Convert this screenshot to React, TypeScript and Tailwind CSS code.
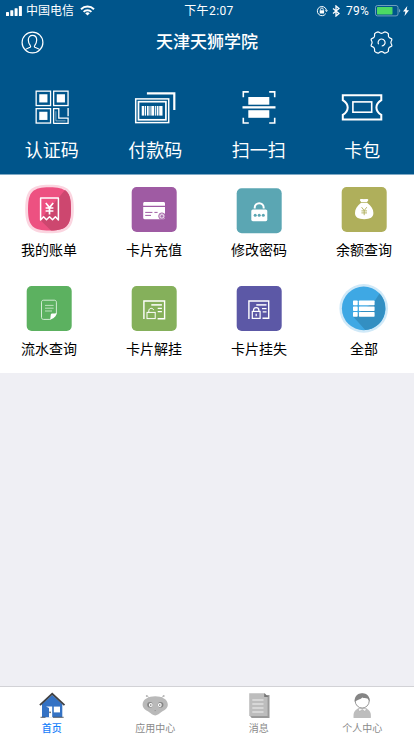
import { type ReactNode } from 'react';
import clsx from 'clsx';

interface Item {
  label: string;
  icon: ReactNode;
}

const quickActions: Item[] = [
  { label: '认证码', icon: <QrIcon /> },
  { label: '付款码', icon: <BarcodeIcon /> },
  { label: '扫一扫', icon: <ScanIcon /> },
  { label: '卡包', icon: <TicketIcon /> },
];

const services: Item[] = [
  { label: '我的账单', icon: <BillIcon /> },
  { label: '卡片充值', icon: <RechargeIcon /> },
  { label: '修改密码', icon: <PasswordIcon /> },
  { label: '余额查询', icon: <BalanceIcon /> },
  { label: '流水查询', icon: <HistoryIcon /> },
  { label: '卡片解挂', icon: <CardUnlockIcon /> },
  { label: '卡片挂失', icon: <CardLockIcon /> },
  { label: '全部', icon: <AllIcon /> },
];

const tabs: Item[] = [
  { label: '首页', icon: <HomeIcon /> },
  { label: '应用中心', icon: <RobotIcon /> },
  { label: '消息', icon: <MessageIcon /> },
  { label: '个人中心', icon: <PersonIcon /> },
];

export default function App() {
  return (
    <div className="flex h-screen w-full flex-col overflow-hidden bg-[#efeff4] font-['Roboto','Noto_Sans_CJK_SC',sans-serif]">
      <header className="h-[174px] shrink-0 bg-[#00558b] text-white">
        <StatusBar />
        <div className="flex h-11 items-center justify-between px-[21px]">
          <UserIcon />
          <h1 className="text-[17px] leading-6 font-medium">天津天狮学院</h1>
          <GearIcon />
        </div>
        <nav className="grid grid-cols-4 pt-[25px]">
          {quickActions.map((item) => (
            <button key={item.label} type="button" className="flex flex-col items-center">
              {item.icon}
              <span className="mt-3.5 text-[18px] leading-6">{item.label}</span>
            </button>
          ))}
        </nav>
      </header>

      <section className="h-[199px] shrink-0 border-t border-[#7fa9c5] bg-white pt-[9px]">
        <div className="-mr-[2.5px] -ml-[3.5px] grid grid-cols-4">
          {services.map((item) => (
            <button key={item.label} type="button" className="flex h-[99px] flex-col items-center">
              {item.icon}
              <span className="mt-1.5 text-[14px] leading-5 text-black">{item.label}</span>
            </button>
          ))}
        </div>
      </section>

      <footer className="mt-auto grid h-[50px] shrink-0 grid-cols-4 border-t border-[#d2d2d6] bg-white">
        {tabs.map((tab, i) => (
          <button key={tab.label} type="button" className="flex flex-col items-center pt-[5px]">
            {tab.icon}
            <span
              className={clsx(
                'mt-[3px] text-[10px] leading-3',
                i === 0 ? 'font-medium text-[#1680fa]' : 'text-[#8a8a8a]',
              )}
            >
              {tab.label}
            </span>
          </button>
        ))}
      </footer>
    </div>
  );
}

function StatusBar() {
  return (
    <div className="grid h-5 grid-cols-[1fr_auto_1fr] items-center pt-px text-[12px] leading-4">
      <div className="flex items-center pl-[6px]">
        <svg width="17" height="10" viewBox="0 0 17 10" fill="#fff">
          <rect x="0" y="6" width="3" height="4" rx="0.6" />
          <rect x="4.3" y="4.2" width="3" height="5.8" rx="0.6" />
          <rect x="8.6" y="2.2" width="3" height="7.8" rx="0.6" />
          <rect x="12.9" y="0" width="3" height="10" rx="0.6" />
        </svg>
        <span className="ml-[3px]">中国电信</span>
        <svg className="ml-[6px]" width="15" height="11" viewBox="0 0 15 11" fill="none" stroke="#fff" strokeWidth="2">
          <path d="M1 4.2a9.4 9.4 0 0 1 13 0" />
          <path d="M3.6 6.9a5.6 5.6 0 0 1 7.8 0" />
          <path d="M7.5 10.6 5.2 8.3a3.4 3.4 0 0 1 4.6 0z" fill="#fff" stroke="none" />
        </svg>
      </div>
      <span className="pl-1 tracking-[0.4px]">下午2:07</span>
      <div className="flex items-center justify-end pr-[5px]">
        <svg width="12" height="12" viewBox="0 0 12 12" fill="none" stroke="#fff">
          <path d="M9.8 8.6A4.6 4.6 0 1 1 10.4 5" />
          <path d="m8.8 5.2 1.7 1.9L12 5.2z" fill="#fff" stroke="none" />
          <rect x="3.7" y="5.3" width="4.4" height="3.2" fill="#fff" stroke="none" />
          <path d="M4.6 5.5V4.3a1.3 1.3 0 0 1 2.6 0v1.2" strokeWidth="0.9" />
        </svg>
        <svg className="ml-1" width="8" height="12" viewBox="0 0 8 12" fill="none" stroke="#fff" strokeWidth="1.3">
          <path d="m1 3.4 6 5L4 11V1l3 2.6-6 5" />
        </svg>
        <span className="ml-[6px] w-[26px] tracking-[0.2px]">79%</span>
        <svg className="ml-[3px]" width="26" height="12" viewBox="0 0 26 12">
          <rect x="0.5" y="0.5" width="22.5" height="10.4" rx="2" fill="none" stroke="#8ab1ca" strokeWidth="0.8" />
          <rect x="2" y="2" width="15.5" height="7.4" rx="0.6" fill="#4cd964" />
          <path d="M24.2 4v3.6c1.4-.6 1.4-3 0-3.6z" fill="#8ab1ca" />
        </svg>
        <svg className="ml-[2px]" width="6" height="10" viewBox="0 0 6 10" fill="#fff">
          <path d="M4.3 0 0 5.5h2.4L1.5 10 6 4.2H3.6z" />
        </svg>
      </div>
    </div>
  );
}

function UserIcon() {
  return (
    <svg width="23" height="23" viewBox="0 0 23 23" fill="none" stroke="#fff" strokeWidth="1.2">
      <circle cx="11.5" cy="11.5" r="10.4" />
      <path d="M4.3 18.7c1.2-1.5 3.7-1.7 4.9-2.5.6-.5.5-1.2 0-1.8C8.200 13 7.300 11.300 7.300 9c0-2.900 1.700-4.600 4.200-4.600s4.200 1.700 4.200 4.600c0 2.300-.9 4-1.900 5.400-.5.600-.6 1.300 0 1.800 1.200.8 3.700 1 4.900 2.500" />
    </svg>
  );
}

function GearIcon() {
  return (
    <svg width="23" height="23" viewBox="0 0 23 23" fill="none" stroke="#fff" strokeWidth="1.2" strokeLinejoin="round">
      <path d="M8 .8c.9 0 1.4 1.5 3.5 1.5S14.100.8 15 .8c1.200.2 2.600 1 3.300 1.800.5.800-.4 1.700.5 3.400.9 1.500 2.500 1.200 3 2.100.5 1.400-.9 1.700-.9 3.400s1.400 2 .9 3.400c-.5.900-2.100.6-3 2.100-.9 1.700 0 2.600-.5 3.400-.7.800-2.100 1.600-3.300 1.800-.9 0-1.400-1.500-3.500-1.500S8.900 22.200 8 22.200c-1.200-.2-2.600-1-3.300-1.800-.5-.8.4-1.700-.5-3.400-.9-1.500-2.500-1.200-3-2.100-.5-1.400.9-1.700.9-3.400S.7 9.500 1.200 8.100C1.700 7.200 3.300 7.500 4.200 6c.9-1.700 0-2.600.5-3.400C5.400 1.800 6.800 1 8 .8z" />
      <path d="M8.600 13.300a3.500 3.500 0 1 1 3.100 1.700" />
    </svg>
  );
}

function QrIcon() {
  return (
    <svg width="44" height="36" viewBox="0 0 44 36" fill="none" stroke="#fff" strokeWidth="1.3">
      {[
        [6.15, 2.15],
        [23.65, 2.15],
        [6.15, 19.65],
      ].map(([x, y]) => (
        <g key={`${x}-${y}`}>
          <rect x={x} y={y} width="14.4" height="14.4" />
          <rect x={x + 3.1} y={y + 3.1} width="8.2" height="8.2" fill="#fff" stroke="none" />
        </g>
      ))}
      <path d="M23.600 34.700V19.600h5.200v9.600h9.300v5.100H23.600M38.100 19v8.200" />
      <path d="M25.900 22.200v9.700h9.700" strokeWidth="1" opacity="0.5" />
    </svg>
  );
}

function BarcodeIcon() {
  return (
    <svg width="44" height="36" viewBox="0 0 44 36" fill="none" stroke="#fff">
      <path d="M13.900 4.300h27.400v16.600" strokeWidth="2.200" />
      <rect x="2.700" y="9.900" width="33" height="23.700" strokeWidth="1.500" />
      <rect x="5.500" y="12.700" width="27.400" height="18.100" strokeWidth="1.700" />
      <g fill="#fff" stroke="none">
        <rect x="8.7" y="17" width="2.6" height="9.6" />
        <rect x="12" y="17" width="1" height="9.6" />
        <rect x="13.9" y="17" width="1.8" height="9.6" />
        <rect x="16.5" y="17" width="1" height="9.6" />
        <rect x="18.3" y="17" width="2.7" height="9.6" />
        <rect x="21.8" y="17" width="1.1" height="9.6" />
        <rect x="23.7" y="17" width="1.8" height="9.6" />
        <rect x="26.2" y="17" width="3.3" height="9.6" />
      </g>
    </svg>
  );
}

function ScanIcon() {
  return (
    <svg width="44" height="36" viewBox="0 0 44 36" fill="none" stroke="#fff" strokeWidth="1.6">
      <path d="M6.300 8.300V2.900h5.500M32.200 2.900h5.500v5.400M6.300 28.700V34h5.500M32.200 34h5.500v-5.300" />
      <g fill="#fff" stroke="none">
        <rect x="11.3" y="8" width="21" height="7.7" />
        <rect x="5.5" y="17.2" width="33" height="2.3" />
        <rect x="11.3" y="21.2" width="21" height="7.6" />
      </g>
    </svg>
  );
}

function TicketIcon() {
  return (
    <svg width="44" height="36" viewBox="0 0 44 36" fill="none" stroke="#fff" strokeWidth="2">
      <path d="M2.800 6.300h38.500v4.900c-3 2-4.900 3.800-4.900 7.200s1.900 5.600 4.900 7.500v4.500H2.800v-4.500c3-1.900 4.900-4.100 4.900-7.500s-1.900-5.200-4.900-7.200z" />
      <rect x="12.9" y="12.9" width="18.8" height="10.3" strokeWidth="1.6" />
    </svg>
  );
}

function Tile({ className, children }: { className: string; children: ReactNode }) {
  return (
    <svg width="50" height="50" viewBox="0 0 50 50" className="shrink-0">
      <rect x="2.7" y="3" width="45" height="45" rx="5" className={className} />
      {children}
    </svg>
  );
}

function BillIcon() {
  return (
    <svg width="50" height="50" viewBox="0 0 50 50" className="shrink-0">
      <path d="M25.500.7C44 .7 49.800 6 49.800 25S44 49.300 25.500 49.300 1.200 44 1.200 25 7 .7 25.500.7z" fill="#fbd5e0" />
      <path d="M25.500 3.300C42.200 3.300 47 8 47 25s-4.800 21.500-21.500 21.500S4 42 4 25 8.800 3.300 25.500 3.300z" fill="#ed5181" />
      <path d="M34.800 13.500 40.900 6C45.500 9 47 14 47 25c0 16.500-4.600 21.200-20 21.500L16.200 36z" fill="#cd476f" />
      <g fill="none" stroke="#fff" strokeWidth="1.5">
        <path d="M16.600 36V13.900h17.800V36l-3-3.200-2.900 2.900-3-2.900-3 2.900-2.900-2.900z" strokeLinejoin="round" />
        <path d="m21.800 19 3.700 4.600 3.700-4.600M21.600 24h7.800M21.600 27h7.800M25.500 23.600v6.800" strokeWidth="1.7" />
      </g>
    </svg>
  );
}

function RechargeIcon() {
  return (
    <Tile className="fill-[#9f5ba3]">
      <path d="M14.200 21.700v-2.200c0-.9.500-1.500 1.400-1.500h19c.9 0 1.400.6 1.400 1.500v2.200z" fill="#fff" />
      <path d="M14.200 23h21.800v10.800c0 .9-.5 1.400-1.400 1.400h-19c-.9 0-1.400-.5-1.400-1.400z" fill="#fff" />
      <path d="M16.200 28.400h7.200M25.400 28.400h3.200M16.200 31.400h5.800" stroke="#9f5ba3" strokeWidth="1" />
      <circle cx="32.9" cy="32.1" r="3.2" fill="#e6d4e8" stroke="#9f5ba3" strokeWidth="0.9" />
      <path d="m31.600 30.500 1.300 1.500 1.300-1.500M32.900 32v2.200M31.500 32.500h2.800" stroke="#9f5ba3" strokeWidth="0.7" fill="none" />
    </Tile>
  );
}

function PasswordIcon() {
  return (
    <svg width="50" height="50" viewBox="0 0 50 50" className="shrink-0">
      <rect x="2.7" y="4.2" width="45" height="45" rx="5" fill="#5ba6b3" />
      <path d="M20.700 24.400v-.7a4.500 4.500 0 0 1 9 0v.7" fill="none" stroke="#fff" strokeWidth="2" />
      <rect x="17.3" y="25.5" width="16" height="11.7" rx="1.6" fill="#fff" />
      <g fill="#5ba6b3">
        <circle cx="21.2" cy="31.3" r="1.5" />
        <circle cx="25.2" cy="31.3" r="1.5" />
        <circle cx="29.3" cy="31.3" r="1.5" />
      </g>
    </svg>
  );
}

function BalanceIcon() {
  return (
    <Tile className="fill-[#afaf5b]">
      <path d="M21 15.500c1.300-.9 2.500-.2 4.100-.4 1.600.2 2.800-.5 4.100.4.600.5-.8 1.800-1.200 2.500h-5.800c-.4-.7-1.800-2-1.200-2.500zM22.100 18.800h6c4.300 3 6.300 6.800 6.300 10.200 0 4.300-3.200 6.200-9.200 6.200S16 33.300 16 29c0-3.400 1.900-7.200 6.100-10.200z" fill="#fff" />
      <path d="m22.600 23.200 2.600 3.400 2.600-3.400M22.400 26.900h5.600M22.400 28.900h5.600M25.200 26.600v4.600" stroke="#afaf5b" strokeWidth="0.9" fill="none" />
    </Tile>
  );
}

function HistoryIcon() {
  return (
    <Tile className="fill-[#5cb160]">
      <path d="M25.800 36.400h-6.300c-1.200 0-2-.8-2-2V19.200c0-1.200.8-2 2-2h10.900c1.200 0 2 .8 2 2v11" fill="none" stroke="#e0f2e1" strokeWidth="0.9" />
      <path d="M25.500 36.900c1.700-1.400.6-5.300 1.800-6.100 1.100-.8 3.500.2 5.600-.7-.6 3.300-3.600 6-7.400 6.800z" fill="#fff" />
      <path d="M21 22.400h8.600M21 25.200h8.600M21 28h7" stroke="#c8e6ca" strokeWidth="0.9" />
    </Tile>
  );
}

function CardUnlockIcon() {
  return (
    <Tile className="fill-[#85b05b]">
      <g fill="none" stroke="#fff">
        <path d="M14.900 36V18h20.700v17.700h-7" strokeWidth="1.4" />
        <path d="M22.300 21.900h10.600" strokeWidth="1.5" />
        <path d="M28.700 25.300h4.200M28.700 28.600h4.200" strokeWidth="1.3" />
        <rect x="18" y="29.4" width="8.2" height="6.2" strokeWidth="1" />
        <path d="M19.800 29.200v-1.400c0-3 4.300-3.300 4.800-.7" strokeWidth="1" />
      </g>
    </Tile>
  );
}

function CardLockIcon() {
  return (
    <Tile className="fill-[#5c58a6]">
      <g fill="none" stroke="#fff">
        <path d="M14.900 36V18h19.800v17.200h-6.200" strokeWidth="1.4" />
        <path d="M22.300 21.900h10.200" strokeWidth="1.5" />
        <path d="M28 25.600h4.500M28.700 28.900h3.800" strokeWidth="1.3" />
        <rect x="18.3" y="28.4" width="7.8" height="7" strokeWidth="1.2" />
        <path d="M19.500 28.200v-.8a2.700 2.700 0 0 1 5.400 0v.8M22.200 30.700v2.500" strokeWidth="1.2" />
      </g>
    </Tile>
  );
}

function AllIcon() {
  return (
    <svg width="50" height="50" viewBox="0 0 50 50" className="shrink-0">
      <circle cx="24.7" cy="25.4" r="24.3" fill="#d0e9f8" />
      <circle cx="24.7" cy="25.4" r="21.8" fill="#3ea8e4" />
      <path d="m35.700 18 4.800-7.500A21.800 21.800 0 0 1 26.300 47.100L14.500 34z" fill="#338fc2" />
      <g fill="#fff">
        <rect x="14" y="17.5" width="4.7" height="4.8" rx="0.7" />
        <rect x="19.900" y="17.5" width="15.7" height="4.8" rx="0.7" />
        <rect x="14" y="23.4" width="4.7" height="4.5" rx="0.7" />
        <rect x="19.900" y="23.4" width="15.7" height="4.5" rx="0.7" />
        <rect x="14" y="29.1" width="4.7" height="4.7" rx="0.7" />
        <rect x="19.900" y="29.1" width="15.7" height="4.7" rx="0.7" />
      </g>
    </svg>
  );
}

function HomeIcon() {
  return (
    <svg width="28" height="28" viewBox="0 0 28 28">
      <path d="M4 12 14.200 3 24.300 12v13.300H4z" fill="#3472c4" />
      <path d="M1.900 13.200 14.200 1.800l12.300 11.400" fill="none" stroke="#3f4043" strokeWidth="1.8" />
      <path d="M8 14.600h6.200v10.800H11V16L8 14.600z" fill="#fff" />
      <rect x="11.300" y="19.600" width="1.500" height="1.500" fill="#555" />
      <rect x="15.800" y="14.600" width="6.200" height="5.800" fill="#fff" />
      <path d="M2.500 25.300h5M15 25.300h10.700" stroke="#3f4043" strokeWidth="0.8" />
    </svg>
  );
}

function RobotIcon() {
  return (
    <svg width="28" height="28" viewBox="0 0 28 28">
      <path d="M6.300 4.300 9 6.300M22.300 4.300l-2.700 2" stroke="#b5b5b5" strokeWidth="0.9" />
      <circle cx="5.8" cy="4" r="1" fill="#b5b5b5" />
      <circle cx="22.7" cy="4" r="1" fill="#b5b5b5" />
      <path d="M14.200 4.200c6.600 0 12.600 3 12.600 8.300 0 4-3 5.500-6 7.200-2.400 1.500-4.300 3.700-6.600 3.700s-4.200-2.200-6.600-3.700c-3-1.700-6-3.200-6-7.200 0-5.300 6-8.300 12.600-8.300z" fill="#b9b9b9" />
      <circle cx="9" cy="12.7" r="2.8" fill="#858585" />
      <circle cx="9.8" cy="13" r="1.900" fill="#fff" />
      <circle cx="9.8" cy="13.1" r="0.8" fill="#777" />
      <circle cx="19.6" cy="12.7" r="2.8" fill="#858585" />
      <circle cx="18.8" cy="13" r="1.900" fill="#fff" />
      <circle cx="18.8" cy="13.1" r="0.8" fill="#777" />
      <path d="M13.600 18.600h1.200" stroke="#888" strokeWidth="0.8" />
    </svg>
  );
}

function MessageIcon() {
  return (
    <svg width="28" height="28" viewBox="0 0 28 28">
      <path d="M19.500 3h5v22.900H6.700L5 24z" fill="#9a9a9a" />
      <path d="M4.200 1.300h15.700L22.600 4.800v19.300H4.200z" fill="#bdbdbd" />
      <path d="M19.200 1.300 23.800 5h-4.600z" fill="#777" />
      <path d="M7.300 8h11.200M7.300 12h11.200M7.300 16h11.200M7.300 20h11.200" stroke="#f1f1f1" strokeWidth="1.1" />
    </svg>
  );
}

function PersonIcon() {
  return (
    <svg width="28" height="28" viewBox="0 0 28 28">
      <path d="M5.600 26c-.6-5 1-8.400 5-9.500h7.200c4 1.100 5.600 4.500 5 9.500z" fill="#bdbdbd" />
      <path d="m10 16.700 1.500 2.800 2.800-2 2.800 2 1.500-2.800z" fill="#fff" stroke="#a8a8a8" strokeWidth="0.6" />
      <circle cx="14.2" cy="9" r="7" fill="#fff" stroke="#8c8c8c" strokeWidth="0.9" />
      <path d="M6.700 9.800C6.300 4.500 9.500 1.300 14.200 1.300s7.900 3.200 7.500 8.500c-.9-1.800-1.400-2.600-2.400-3.300-1.800-.5-3.200-.3-5-1.100-1.500 1.800-4.800 2.200-7.600 4.400z" fill="#858585" />
    </svg>
  );
}
